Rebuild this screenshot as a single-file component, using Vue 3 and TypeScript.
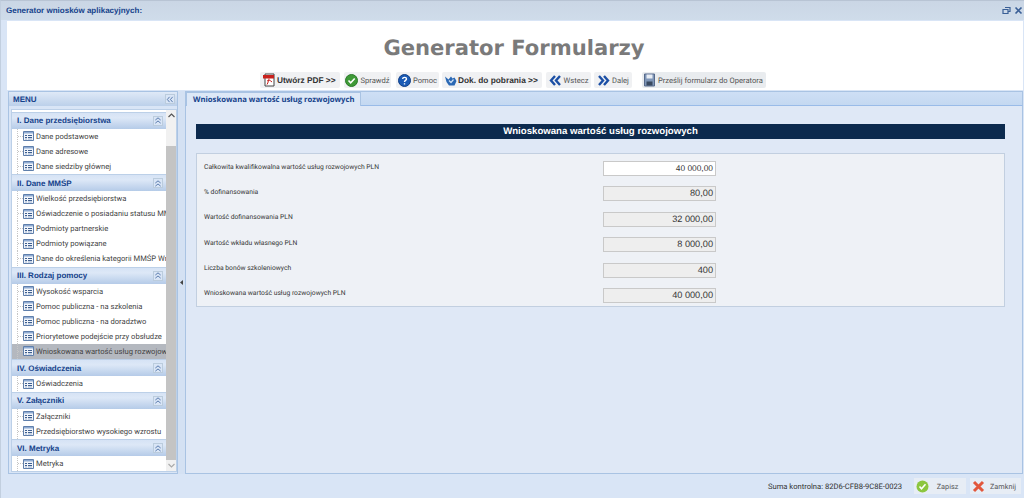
<script setup lang="ts">
interface Section { title: string; items: string[]; active?: string }
const sections: Section[] = [
  { title: 'I. Dane przedsiębiorstwa', items: ['Dane podstawowe', 'Dane adresowe', 'Dane siedziby głównej'] },
  { title: 'II. Dane MMŚP', items: ['Wielkość przedsiębiorstwa', 'Oświadczenie o posiadaniu statusu MMŚP', 'Podmioty partnerskie', 'Podmioty powiązane', 'Dane do określenia kategorii MMŚP Wnioskodawcy'] },
  { title: 'III. Rodzaj pomocy', items: ['Wysokość wsparcia', 'Pomoc publiczna - na szkolenia', 'Pomoc publiczna - na doradztwo', 'Priorytetowe podejście przy obsłudze', 'Wnioskowana wartość usług rozwojowych'], active: 'Wnioskowana wartość usług rozwojowych' },
  { title: 'IV. Oświadczenia', items: ['Oświadczenia'] },
  { title: 'V. Załączniki', items: ['Załączniki', 'Przedsiębiorstwo wysokiego wzrostu'] },
  { title: 'VI. Metryka', items: ['Metryka'] },
]
const fields = [
  { label: 'Całkowita kwalifikowalna wartość usług rozwojowych PLN', value: '40 000,00', editable: true },
  { label: '% dofinansowania', value: '80,00', editable: false },
  { label: 'Wartość dofinansowania PLN', value: '32 000,00', editable: false },
  { label: 'Wartość wkładu własnego PLN', value: '8 000,00', editable: false },
  { label: 'Liczba bonów szkoleniowych', value: '400', editable: false },
  { label: 'Wnioskowana wartość usług rozwojowych PLN', value: '40 000,00', editable: false },
]
</script>

<template>
  <div class="win">
    <header class="win-head">
      <span class="win-title">Generator wniosków aplikacyjnych:</span>
      <span class="win-tools">
        <svg width="9" height="9" viewBox="0 0 9 9"><path d="M3 1.500h5v4H6M1 3.500h5v4H1z" fill="none" stroke="#3a5f96" stroke-width="1.200"/></svg>
        <svg width="9" height="9" viewBox="0 0 9 9"><path d="M1.500 1.500l6 6M7.500 1.500l-6 6" stroke="#3a5f96" stroke-width="1.600"/></svg>
      </span>
    </header>
    <div class="win-body">
      <section class="top">
        <h1 class="brand">Generator Formularzy</h1>
        <nav class="toolbar">
          <button class="btn bold w-pdf">
            <svg width="14" height="14" viewBox="0 0 14 14"><path d="M3 1h9v12H3z" fill="#fff" stroke="#444"/><path d="M1 2h11v3.500H1z" fill="#c8201c"/><path d="M5 8c2-1 3-1 5 1M5 11.500c1-2 2-4 2-6" fill="none" stroke="#c8201c"/></svg>
            Utwórz PDF &gt;&gt;
          </button>
          <button class="btn w-spr">
            <svg width="13" height="13" viewBox="0 0 13 13"><circle cx="6.500" cy="6.500" r="6" fill="#3f9a37" stroke="#2b7a2a"/><path d="M3.500 6.500l2.200 2.400 4-4.400" fill="none" stroke="#fff" stroke-width="1.600"/></svg>
            Sprawdź
          </button>
          <button class="btn w-pom">
            <svg width="13" height="13" viewBox="0 0 13 13"><circle cx="6.500" cy="6.500" r="6" fill="#1b5bb5" stroke="#123f85"/><path d="M4.600 5c.2-2.200 3.900-2.200 3.900 0 0 1.400-2 1.400-2 3M6.500 9.200v1.200" fill="none" stroke="#fff" stroke-width="1.400"/></svg>
            Pomoc
          </button>
          <button class="btn bold w-dok">
            <svg width="13" height="13" viewBox="0 0 13 13"><path d="M1 2.500l3.500 3L7 2.500l1.500 2 2-1L12.500 7l-2 4.500H5L2.500 8z" fill="#2a68b4"/><path d="M5 6.500l2 2 2.500-3" fill="none" stroke="#cfe0f4" stroke-width="1.200"/></svg>
            Dok. do pobrania &gt;&gt;
          </button>
          <button class="btn w-wst">
            <svg width="13" height="13" viewBox="0 0 13 13"><path d="M6 2L2 6.500l4 4.500M11 2L7 6.500l4 4.500" fill="none" stroke="#1b4fa5" stroke-width="2.400"/></svg>
            Wstecz
          </button>
          <button class="btn w-dal">
            <svg width="13" height="13" viewBox="0 0 13 13"><path d="M2 2l4 4.500L2 11M7 2l4 4.500L7 11" fill="none" stroke="#1b4fa5" stroke-width="2.400"/></svg>
            Dalej
          </button>
          <button class="btn w-prz">
            <svg width="13" height="14" viewBox="0 0 13 14"><path d="M1.500 1h10v12h-10z" fill="#7f96b8" stroke="#56698a"/><path d="M3.500 1.500h6v4h-6z" fill="#e8edf4"/><path d="M3.500 8.500h6v4h-6z" fill="#39495f"/></svg>
            Prześlij formularz do Operatora
          </button>
        </nav>
      </section>

      <div class="panels">
        <aside class="side">
          <div class="side-head">
            <span>MENU</span>
            <span class="tool-btn">
              <svg width="9" height="9" viewBox="0 0 9 9"><path d="M4 1.500L1.500 4.500 4 7.500M7.500 1.500L5 4.500l2.500 3" fill="none" stroke="#4a6fa5" stroke-width="1"/></svg>
            </span>
          </div>
          <div class="side-body">
            <div class="acc">
              <div v-for="s in sections" :key="s.title" class="sec">
                <div class="sec-head">
                  <span>{{ s.title }}</span>
                  <span class="tool-btn">
                    <svg width="9" height="9" viewBox="0 0 9 9"><path d="M1.500 4L4.500 1.500 7.500 4M1.500 7.500L4.500 5l3 2.500" fill="none" stroke="#4a6fa5" stroke-width="1"/></svg>
                  </span>
                </div>
                <ul class="tree">
                  <li v-for="it in s.items" :key="it" class="node" :class="{ active: it === s.active }">
                    <span class="elbow"></span>
                    <svg class="leaf" width="11" height="10" viewBox="0 0 11 10"><path d="M.5.500h10v9H.5z" fill="#f2f5fa" stroke="#5f7fab"/><path d="M1 1h9v1.500H1z" fill="#8fabd3"/><path d="M2 4.500h2M5 4.500h4M2 6.500h2M5 6.500h4" stroke="#3e5f8f"/><path d="M2 8h2M5 8h4" stroke="#9db2d0"/></svg>
                    <span>{{ it }}</span>
                  </li>
                </ul>
              </div>
            </div>
            <div class="scroll">
              <span class="arr">
                <svg width="7" height="5" viewBox="0 0 7 5"><path d="M.500 4L3.500 1l3 3" fill="none" stroke="#555" stroke-width="1.200"/></svg>
              </span>
              <span class="thumb"></span>
              <span class="arr">
                <svg width="7" height="5" viewBox="0 0 7 5"><path d="M.500 1l3 3 3-3" fill="none" stroke="#aaa" stroke-width="1.200"/></svg>
              </span>
            </div>
          </div>
        </aside>

        <div class="split">
          <svg width="3" height="5" viewBox="0 0 3 5"><path d="M3 0v5L0 2.500z" fill="#444"/></svg>
        </div>

        <main class="main">
          <div class="tabs">
            <span class="tab">Wnioskowana wartość usług rozwojowych</span>
          </div>
          <div class="content">
            <h2 class="bar">Wnioskowana wartość usług rozwojowych</h2>
            <div class="form">
              <div v-for="f in fields" :key="f.label" class="row">
                <span class="lab">{{ f.label }}</span>
                <span class="field" :class="{ edit: f.editable }">{{ f.value }}</span>
              </div>
            </div>
          </div>
        </main>
      </div>

      <footer class="foot">
        <span class="sum">Suma kontrolna: 82D6-CFB8-9C8E-0023</span>
        <button class="fbtn w-zap">
          <svg width="13" height="13" viewBox="0 0 13 13"><circle cx="6.500" cy="6.500" r="6" fill="#8cc63f"/><path d="M3.500 6.500l2 2.200 4-4.400" fill="none" stroke="#fff" stroke-width="1.600"/></svg>
          <span>Zapisz</span>
        </button>
        <button class="fbtn w-zam">
          <svg width="13" height="13" viewBox="0 0 13 13"><path d="M2 2l9 9M11 2l-9 9" stroke="#e2573c" stroke-width="3"/></svg>
          <span>Zamknij</span>
        </button>
      </footer>
    </div>
  </div>
</template>

<style>
html, body { margin: 0; padding: 0; background: #dfe8f6; }
</style>

<style scoped>
* { box-sizing: border-box; }
.win {
  width: 1024px; height: 498px; overflow: hidden;
  display: flex; flex-direction: column;
  background: #d9e5f6;
  font-family: Roboto, "Liberation Sans", sans-serif;
  font-size: 7.600px; color: #333;
  text-rendering: geometricPrecision;
  border-top: 1px solid #b8c4d4;
  border-left: 1px solid #c2cfdf;
}
.win-head {
  height: 19px; flex: none; display: flex; align-items: center; justify-content: space-between;
  padding: 0 1px 0 5px;
  background: linear-gradient(#cad6e5, #cfdcea);
}
.win-title { font-family: "Liberation Sans", sans-serif; font-weight: 700; font-size: 8px; color: #15428b; }
.win-tools { display: flex; gap: 3px; align-items: center; }
.win-body { flex: 1; min-height: 0; display: flex; flex-direction: column; padding-left: 6px; padding-right: 1px; }
.top {
  height: 69px; flex: none; background: #fff; margin-top: 1px;
  display: flex; flex-direction: column; align-items: center;
}
.brand {
  margin: 15px 0 0; height: 24px; line-height: 24px;
  font-family: "DejaVu Sans", sans-serif; font-weight: 700; font-size: 21.100px; color: #7a7a7a;
  transform: translateX(-1px);
}
.toolbar { display: flex; height: 16px; margin-top: 12px; transform: translateX(-2px); }
.btn {
  height: 16px; display: flex; align-items: center; justify-content: center; gap: 2px;
  border: 0; padding: 0; border-radius: 2px; white-space: nowrap;
  background: #f0f1f3; color: #555;
  font: 7.600px Roboto, sans-serif;
  text-rendering: geometricPrecision;
}
.btn.bold { font: 700 8.300px "Liberation Sans", sans-serif; color: #333; justify-content: flex-start; padding-left: 2px; gap: 1px; }
.w-pdf { width: 80px; margin-right: 4px; }
.w-spr { width: 47px; margin-right: 5px; }
.w-pom { width: 43px; margin-right: 3px; }
.w-dok { width: 100px; margin-right: 4px; }
.w-wst { width: 45px; margin-right: 3px; }
.w-dal { width: 38px; margin-right: 10px; }
.w-prz { width: 124px; background: #e9ecef; justify-content: flex-start; padding-left: 1px; }

.panels { flex: 1; min-height: 0; display: flex; padding: 1px 0 0 1px; }
.side {
  width: 170px; flex: none; display: flex; flex-direction: column;
  border: 1px solid #a9c3e3; background: #d9e5f6;
}
.side-head, .tabs { flex: none; }
.side-head {
  height: 14px; display: flex; align-items: center; justify-content: space-between;
  padding: 0 2px 0 4px;
  background: linear-gradient(#dfe9f7, #bcd0ea);
  color: #15428b; font: 700 8px "Liberation Sans", sans-serif;
}
.tool-btn {
  width: 10px; height: 10px; display: flex; align-items: center; justify-content: center;
  background: #d9e5f6; border: 1px solid #bcd; 
}
.side-body { flex: 1; min-height: 0; display: flex; margin: 3px 0 1px 2px; background: #fff; border: 1px solid #bcd0e8; }
.acc { width: 154px; flex: none; padding-top: 1.500px; overflow: hidden; }
.sec-head {
  height: 17px; display: flex; align-items: center; justify-content: space-between;
  padding: 0 3px 0 5px;
  background: linear-gradient(#d6e3f5 0%, #dde8f7 30%, #b5cbe8 100%);
  border-top: 1px solid #bcd0e8;
  color: #15428b; font: 700 8px "Liberation Sans", sans-serif;
}
.tree { list-style: none; margin: 0; padding: 0 0 .600px; background: #fff; }
.node { height: 15px; display: flex; align-items: center; padding-left: 5px; white-space: nowrap; overflow: hidden; color: #444; }
.node.active { background: #b4b8bf; }
.elbow { width: 6px; height: 15px; flex: none; border-left: 1px dotted #c6c6c6; }
.elbow::after { content: ""; display: block; width: 5px; margin-top: 7px; border-top: 1px dotted #c6c6c6; }
.leaf { flex: none; margin-right: 2px; }
.scroll { width: 10px; flex: none; display: flex; flex-direction: column; background: #f1f1f1; }
.arr { height: 11px; flex: none; display: flex; align-items: center; justify-content: center; background: #f1f1f1; }
.thumb { flex: 1; background: #c4c4c4; margin-top: 25px; }
.split { width: 7px; flex: none; display: flex; align-items: center; justify-content: center; background: #d4e1f3; }
.main { flex: 1; min-width: 0; display: flex; flex-direction: column; }
.tabs {
  height: 15px; display: flex; align-items: flex-end;
  background: linear-gradient(#cedff5, #c4d8f1);
  border: 1px solid #a9c3e3; border-bottom: 1px solid #99bbe8;
}
.tab {
  height: 14px; padding: 0 6px; display: flex; align-items: center;
  background: #dde8f7; border: 1px solid #a9c3e3; border-bottom: 0;
  color: #15428b; font: 700 7.700px "Open Sans", sans-serif;
  margin-bottom: -1px; white-space: nowrap;
}
.content {
  flex: 1; min-height: 0; padding: 18px 17px 0 10px;
  background: #dfe8f6; border: 1px solid #a9c3e3; border-top: 0;
}
.bar {
  margin: 0; height: 15px; text-align: center;
  background: #0c2a4e; color: #fff; font: 700 9.650px/15px "Liberation Sans", sans-serif;
}
.form {
  margin-top: 14px; height: 154px; padding-top: 7px;
  background: #eef1f6; border: 1px solid #c2cfe0;
}
.row { height: 25.400px; display: flex; align-items: flex-start; justify-content: space-between; padding: 0 288px 0 7px; font-size: 6.750px; }
.lab { line-height: 9px; margin-top: 1.500px; }
.field {
  width: 113px; height: 15px; text-align: right; padding-right: 2px;
  background: #eeeeee; border: 1px solid #c9c9c9; color: #333;
  font: 9.200px/13px "Liberation Sans", sans-serif;
}
.field.edit { background: #fff; font-size: 8.400px; }
.foot { height: 24px; flex: none; display: flex; align-items: center; justify-content: flex-end; padding: 0 2px 0 0; }
.sum { color: #333; margin-right: 12px; }
.fbtn {
  height: 16px; display: flex; align-items: center; border: 0; padding: 0 0 0 2px;
  background: #e7edf5; color: #555; font: 7.300px Roboto, sans-serif;
  text-rendering: geometricPrecision;
}
.fbtn span { flex: 1; text-align: center; }
.w-zap { width: 52px; margin-right: 4px; }
.w-zam { width: 51px; }
</style>
